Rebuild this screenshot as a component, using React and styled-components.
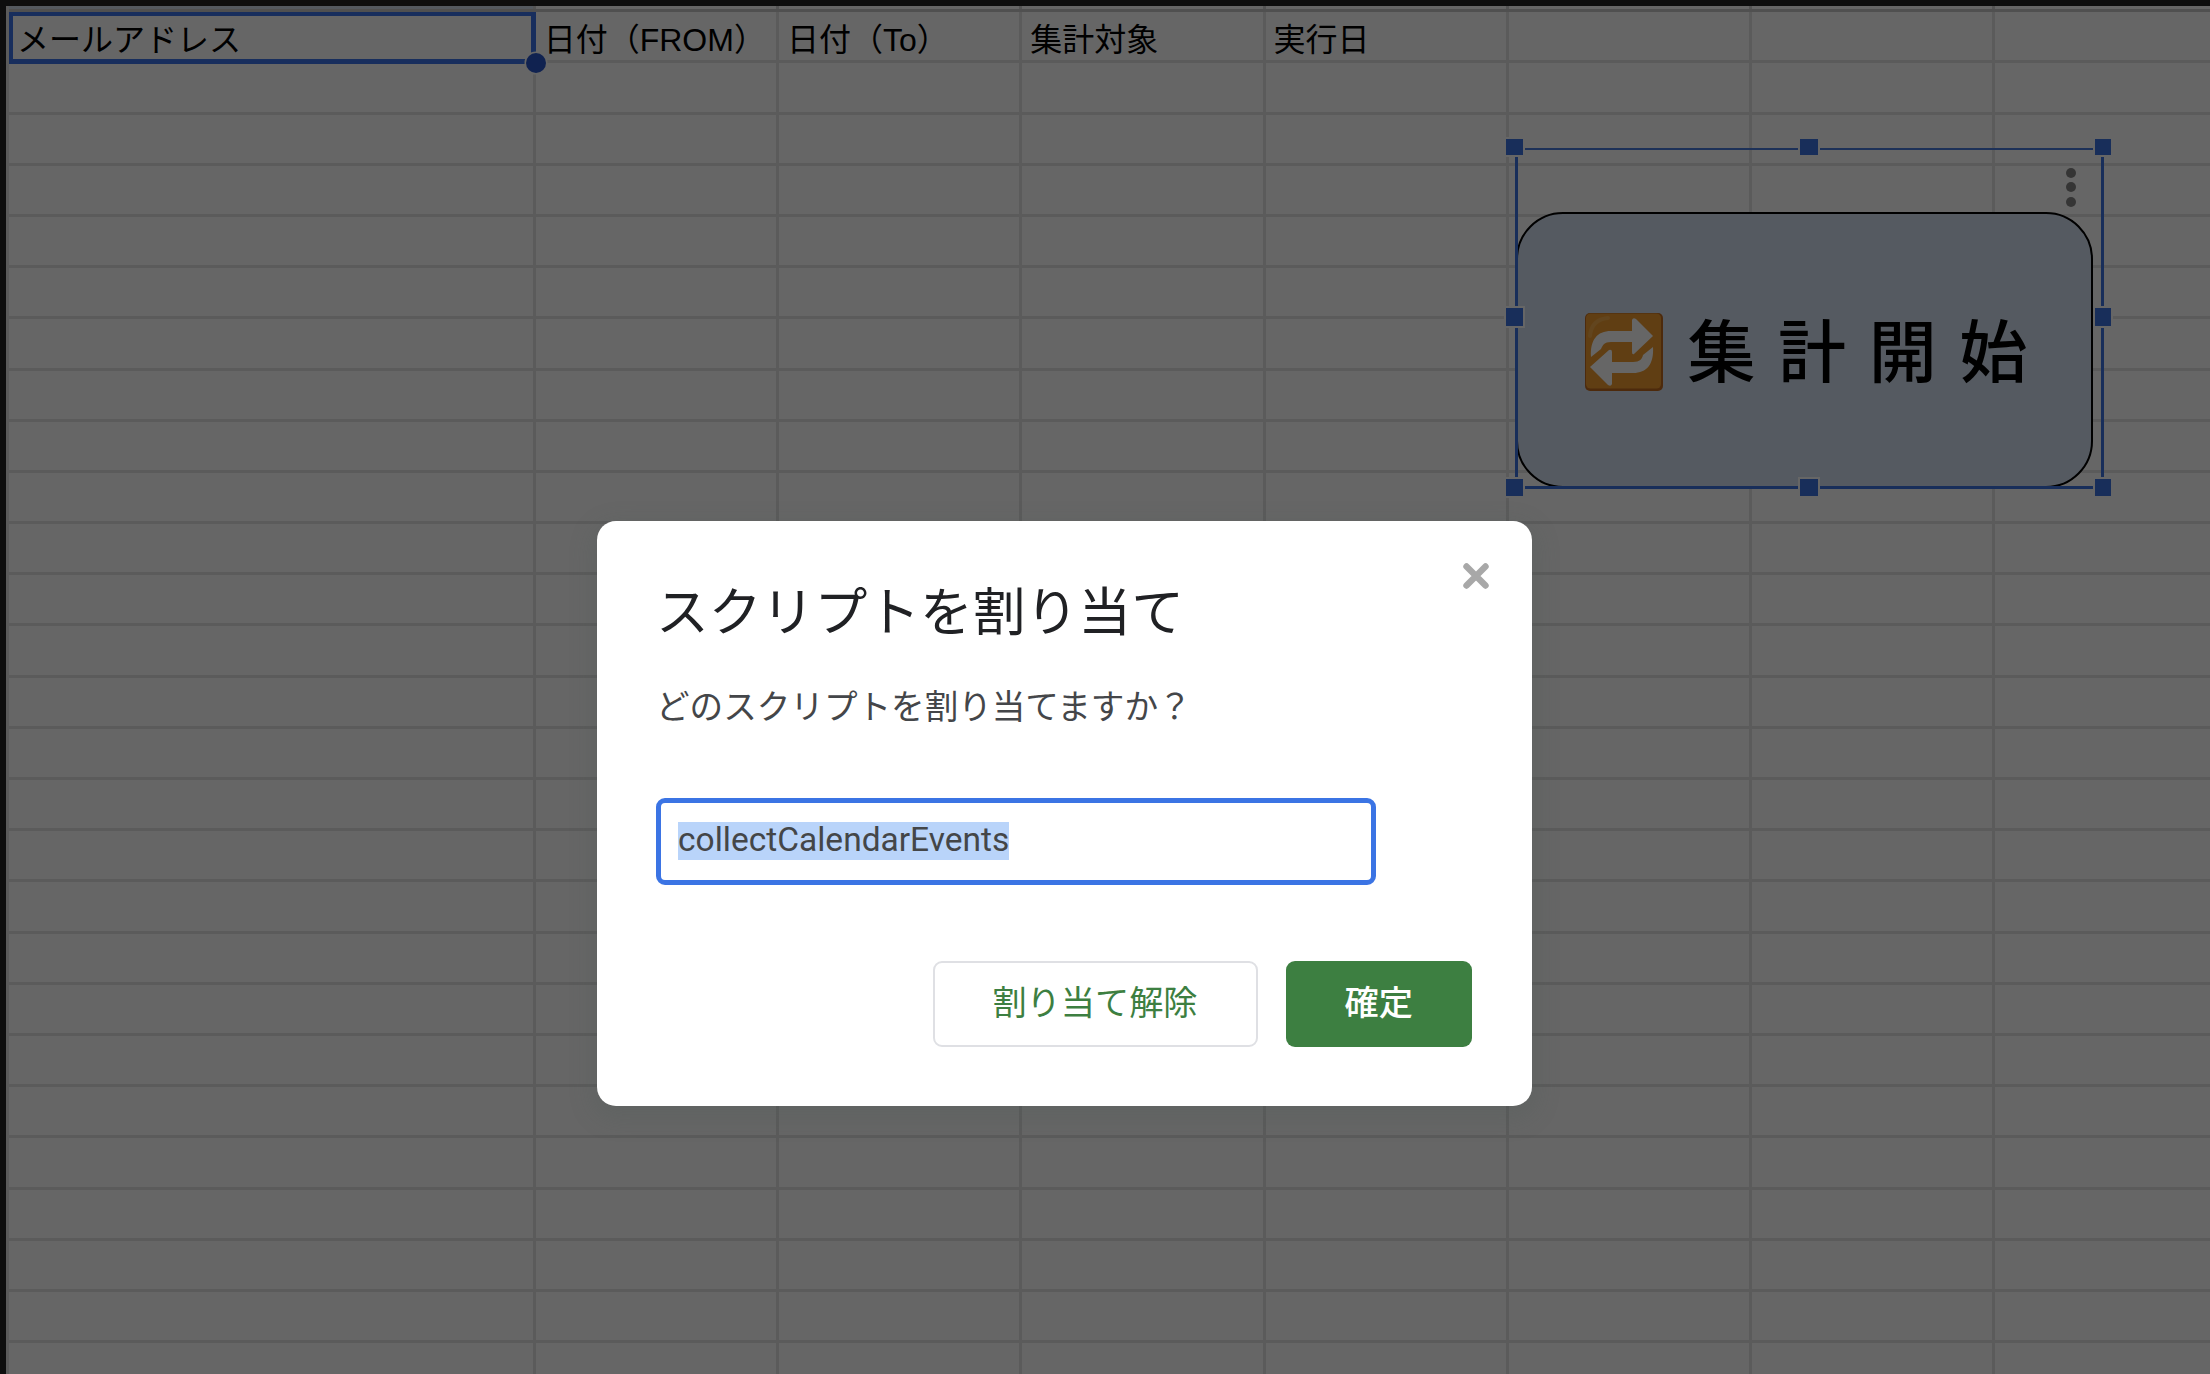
import React from "react";
import styled, { createGlobalStyle } from "styled-components";

const Global = createGlobalStyle`
  * { box-sizing: border-box; }
  html, body { margin: 0; padding: 0; }
  body { width: 2210px; height: 1374px; overflow: hidden; background: #0e0e0e; }
`;

const uiFont = `Roboto, "Noto Sans CJK JP", sans-serif`;
const cellFont = `"Liberation Sans", "Noto Sans CJK JP", sans-serif`;

const Window = styled.div`
  position: relative;
  width: 2210px;
  height: 1374px;
  padding: 6px 0 0 6px;
  overflow: hidden;
  background: #0e0e0e;
`;

const Sheet = styled.main`
  isolation: isolate;
  height: 1368px;
  overflow: hidden;
  background: #fff;
  border-left: 3px solid #e3e3e3;
`;

const columns = "526.7px repeat(7, 243.3px)";

const HeaderStrip = styled.div`
  display: grid;
  grid-template-columns: ${columns};
  height: 6.2px;
  border-bottom: 3px solid #c8c8c8;
`;

const HeaderCell = styled.div`
  background: ${(p) => (p.$active ? "#d2deee" : "#ffffff")};
  border-right: 3px solid #d4d4d4;
`;

const Row = styled.div`
  display: grid;
  grid-template-columns: ${columns};
  height: 51.19px;
`;

const Cell = styled.div`
  position: relative;
  z-index: ${(p) => (p.$selected ? 1 : "auto")};
  display: flex;
  align-items: center;
  padding: 7px 0 0 8px;
  border-right: 3px solid #e3e3e3;
  border-bottom: 3px solid #e3e3e3;
  font-family: ${cellFont};
  font-size: 32px;
  line-height: 40px;
  color: #000;
  white-space: nowrap;
`;

const ActiveOutline = styled.span`
  position: absolute;
  inset: 0 -3px -4px -1px;
  border: 5px solid #3c74e8;
  border-top-width: 4px;
`;

const FillHandle = styled.span`
  position: absolute;
  right: -13px;
  bottom: -13px;
  width: 20px;
  height: 20px;
  border-radius: 50%;
  background: #2956c8;
  box-shadow: 0 0 0 1.5px #fff;
`;

const Drawing = styled.div`
  position: absolute;
  left: 1515px;
  top: 148px;
  width: 589px;
  height: 341px;
`;

const Shape = styled.div`
  position: absolute;
  left: 1px;
  top: 64px;
  width: 577px;
  height: 276px;
  display: flex;
  align-items: center;
  padding: 4px 0 0 66.5px;
  gap: 25px;
  border: 2.6px solid #000;
  border-radius: 47px;
  background: #d4e0f2;
`;

const ShapeLabel = styled.span`
  margin-top: -9px;
  font-family: "Noto Sans CJK JP", sans-serif;
  font-size: 68px;
  font-weight: 500;
  line-height: 80px;
  letter-spacing: 22.6px;
  color: #000;
  white-space: nowrap;
`;

const Frame = styled.div`
  position: absolute;
  inset: 0;
  border: 3px solid #3c74e0;
  border-top: 2px solid #4a7cdc;
`;

const Handle = styled.span`
  position: absolute;
  left: ${(p) => p.$x}px;
  top: ${(p) => p.$y}px;
  width: ${(p) => p.$w}px;
  height: ${(p) => p.$h}px;
  background: #3c74e0;
  box-shadow: 0 0 0 2px #fff;
`;

const MoreDots = styled.div`
  position: absolute;
  left: 550.5px;
  top: 19.5px;
  display: flex;
  flex-direction: column;
  gap: 4.6px;
`;

const Dot = styled.span`
  width: 10px;
  height: 10px;
  border-radius: 50%;
  background: #858585;
`;

const Scrim = styled.div`
  position: absolute;
  inset: 6px 0 0 6px;
  display: flex;
  align-items: flex-start;
  padding: 515px 0 0 590.5px;
  background: rgba(0, 0, 0, 0.6);
`;

const Dialog = styled.section`
  position: relative;
  width: 935px;
  height: 585px;
  display: flex;
  flex-direction: column;
  align-items: flex-start;
  padding: 60px 60px 0 59px;
  border-radius: 19px;
  background: #fff;
  box-shadow: 0 8px 22px 6px rgba(76, 92, 88, 0.22);
  font-family: ${uiFont};
`;

const Title = styled.h1`
  margin: 0 0 0 0.5px;
  font-size: 52.8px;
  font-weight: 400;
  line-height: 64px;
  color: #202124;
  white-space: nowrap;
`;

const Prompt = styled.p`
  margin: 42.5px 0 0 0.5px;
  font-size: 33.6px;
  line-height: 40px;
  color: #444649;
  white-space: nowrap;
`;

const Field = styled.div`
  display: flex;
  align-items: center;
  width: 720.5px;
  height: 87px;
  margin-top: 70px;
  padding-left: 17.5px;
  border: 5px solid #3b74e4;
  border-radius: 9px;
`;

const Selected = styled.mark`
  height: 38px;
  background: #b9d4fa;
  color: #444648;
  font-size: 33.5px;
  line-height: 36px;
`;

const Actions = styled.div`
  display: flex;
  align-self: flex-end;
  gap: 28.5px;
  margin-top: 76.5px;
`;

const Button = styled.button`
  display: flex;
  align-items: center;
  justify-content: center;
  width: ${(p) => p.$width}px;
  height: 86px;
  padding: 0 0 8px;
  border: ${(p) => (p.$primary ? "0" : "2px solid #dfe0e4")};
  border-radius: 9px;
  background: ${(p) => (p.$primary ? "#3d7f41" : "#fff")};
  color: ${(p) => (p.$primary ? "#fff" : "#3d7f41")};
  font-family: ${uiFont};
  font-size: 34.2px;
  font-weight: ${(p) => (p.$primary ? 500 : 400)};
  white-space: nowrap;
`;

const Close = styled.button`
  position: absolute;
  right: 42px;
  top: 41px;
  width: 28px;
  height: 28px;
  padding: 0;
  border: 0;
  background: none;
  svg { display: block; }
`;

function RepeatIcon() {
  return (
    <svg width="78" height="78" viewBox="0 0 78 78">
      <rect width="78" height="78" rx="5" fill="#c06a20" />
      <rect width="75" height="75" x="1" y="0.5" rx="4.5" fill="#ef9c30" />
      <path d="M5 23C6 12 12 6 23 5" fill="none" stroke="#f5ac4c" strokeWidth="4" strokeLinecap="round" />
      <path
        fill="#fff"
        d="M6 44C5 27 12 18 26 18H47V7Q48 4 51 6L68 23L49 41Q47 42 47 39V29H26C19 29 18 32 16 36Z"
      />
      <path
        fill="#fff"
        d="M68 34C69 51 62 60 48 60H27V71Q26 74 23 72L5 54L24 37Q27 36 27 39V49H48C55 49 57 46 58 42Z"
      />
    </svg>
  );
}

const labels = ["メールアドレス", "日付（FROM）", "日付（To）", "集計対象", "実行日", "", "", ""];
const bodyRows = Array.from({ length: 26 }, (_, i) => i);

const handles = [
  [-9.3, -9.3, 17.6, 16],
  [285.3, -9.3, 17.6, 16],
  [579.7, -9.3, 16, 16],
  [-9.3, 160.3, 17.6, 17.4],
  [579.7, 160.3, 16, 17.4],
  [-9.3, 331.3, 17.6, 16.3],
  [285.3, 331.3, 17.6, 16.3],
  [579.7, 331.3, 16, 16.3],
];

export default function App() {
  return (
    <>
      <Global />
      <Window>
        <Sheet>
          <HeaderStrip>
            {labels.map((_, i) => (
              <HeaderCell key={i} $active={i === 0} />
            ))}
          </HeaderStrip>
          <Row>
            {labels.map((label, i) => (
              <Cell key={i} $selected={i === 0}>
                {label}
                {i === 0 && (
                  <>
                    <ActiveOutline />
                    <FillHandle />
                  </>
                )}
              </Cell>
            ))}
          </Row>
          {bodyRows.map((r) => (
            <Row key={r}>
              {labels.map((_, i) => (
                <Cell key={i} />
              ))}
            </Row>
          ))}
        </Sheet>
        <Drawing>
          <Shape>
            <RepeatIcon />
            <ShapeLabel>集計開始</ShapeLabel>
          </Shape>
          <Frame />
          {handles.map(([x, y, w, h]) => (
            <Handle key={`${x},${y}`} $x={x} $y={y} $w={w} $h={h} />
          ))}
          <MoreDots>
            <Dot />
            <Dot />
            <Dot />
          </MoreDots>
        </Drawing>
        <Scrim>
          <Dialog>
            <Title>スクリプトを割り当て</Title>
            <Prompt>どのスクリプトを割り当てますか？</Prompt>
            <Field>
              <Selected>collectCalendarEvents</Selected>
            </Field>
            <Actions>
              <Button $width={325}>割り当て解除</Button>
              <Button $width={185.5} $primary>
                確定
              </Button>
            </Actions>
            <Close aria-label="閉じる">
              <svg width="28" height="28" viewBox="0 0 28 28">
                <path d="M4.5 4.5L23.5 23.5M23.5 4.5L4.5 23.5" stroke="#a8a8a8" strokeWidth="6.4" strokeLinecap="round" />
              </svg>
            </Close>
          </Dialog>
        </Scrim>
      </Window>
    </>
  );
}
